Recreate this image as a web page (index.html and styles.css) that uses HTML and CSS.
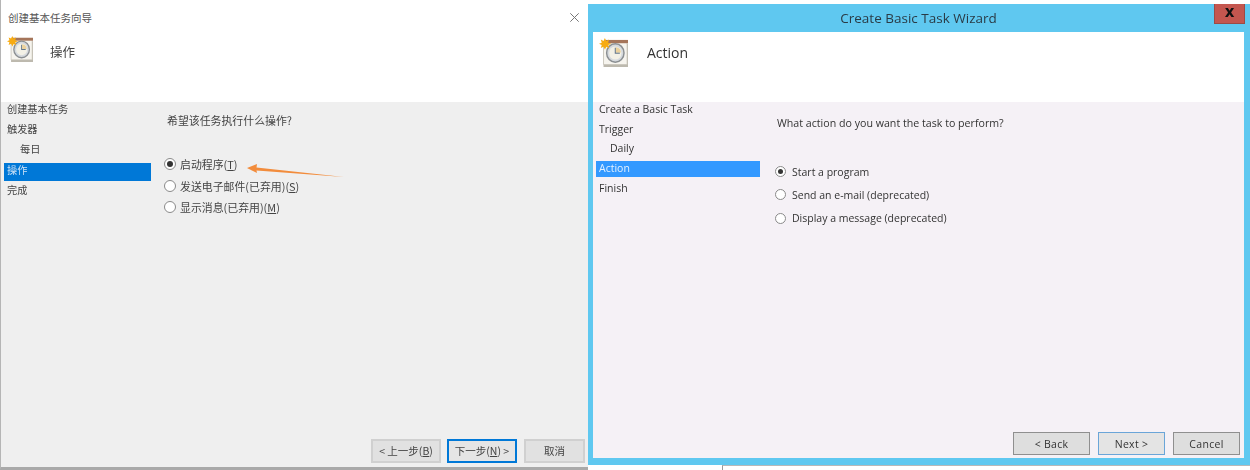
FILE: index.html
```html
<!DOCTYPE html>
<html lang="zh">
<head>
<meta charset="utf-8">
<title>Create Basic Task Wizard</title>
<link rel="stylesheet" href="styles.css">
</head>
<body>
<svg class="defs" width="0" height="0" aria-hidden="true">
  <symbol id="task" viewBox="0 0 32 30" preserveAspectRatio="none">
    <path d="M5 6h27v24H5z" fill="#bdb9ae"/>
    <path d="M5 4h26v23.5H5z" fill="#f6f4ee" stroke="#c4c0b5" stroke-width=".8"/>
    <path d="M6 2h26v3.4H6z" fill="#a5755a"/>
    <circle cx="18" cy="15.5" r="9.6" fill="#d6dade" stroke="#8b8f92" stroke-width="1.6"/>
    <circle cx="18" cy="15.5" r="6.8" fill="#f3f1e6"/>
    <path d="M18 10v5.6h5" fill="none" stroke="#64788c" stroke-width="1.2"/>
    <path d="M18.6 9.5a6 6 0 0 1 5.6 5.5h-5.6z" fill="#e9c98a" opacity=".8"/>
    <path d="M6.5 0l1.5 3 3-1.4-.9 3.2 3.4 1.2-3.3 1.3 1 3.2-3.1-1.4L6.5 12 5 9l-3 1.4 1-3.2L-.2 6l3.2-1.2-1-3.2 3 1.4z" fill="#f7ab12"/>
  </symbol>
</svg>
<div class="page">
  <section class="win win-zh">
    <header class="head-zh">
      <div class="title-zh"><span>创建基本任务向导</span><svg class="close-thin" viewBox="0 0 9 9"><path d="M.3.3l8.4 8.4M8.7.3L.3 8.7" stroke="#777" fill="none"/></svg></div>
      <div class="action-zh"><svg class="icon"><use href="#task"/></svg><h1>操作</h1></div>
    </header>
    <div class="body-zh">
      <ul class="steps steps-zh">
        <li>创建基本任务</li>
        <li>触发器</li>
        <li class="sub">每日</li>
        <li class="sel">操作</li>
        <li>完成</li>
      </ul>
      <div class="main main-zh">
        <p class="q">希望该任务执行什么操作?</p>
        <div class="opts">
          <label class="opt"><i class="radio on"></i><span>启动程序(<u>T</u>)</span></label>
          <label class="opt"><i class="radio"></i><span>发送电子邮件(已弃用)(<u>S</u>)</span></label>
          <label class="opt"><i class="radio"></i><span>显示消息(已弃用)(<u>M</u>)</span></label>
        </div>
        <svg class="arrow" viewBox="0 0 100 15"><path d="M1 5L11 1l-.5 3.5L98 14 10.5 7.5 11 10z" fill="#f28c3c"/></svg>
        <div class="btns">
          <button class="b-back">&lt; 上一步(<u>B</u>)</button>
          <button class="b-next default">下一步(<u>N</u>) &gt;</button>
          <button class="b-cancel">取消</button>
        </div>
      </div>
    </div>
  </section>
  <div class="right">
    <section class="win win-en" lang="en">
      <div class="titlebar"><span>Create Basic Task Wizard</span><div class="close-red">x</div></div>
      <div class="inner">
        <header class="head-en"><svg class="icon"><use href="#task"/></svg><h1>Action</h1></header>
        <div class="body-en">
          <ul class="steps steps-en">
            <li>Create a Basic Task</li>
            <li>Trigger</li>
            <li class="sub">Daily</li>
            <li class="sel">Action</li>
            <li>Finish</li>
          </ul>
          <div class="main main-en">
            <p class="q">What action do you want the task to perform?</p>
            <div class="opts">
              <label class="opt"><i class="radio on"></i><span>Start a program</span></label>
              <label class="opt"><i class="radio"></i><span>Send an e-mail (deprecated)</span></label>
              <label class="opt"><i class="radio"></i><span>Display a message (deprecated)</span></label>
            </div>
            <div class="btns">
              <button>&lt; Back</button>
              <button class="default">Next &gt;</button>
              <button>Cancel</button>
            </div>
          </div>
        </div>
      </div>
    </section>
    <div class="sliver"></div>
  </div>
</div>
</body>
</html>
```

FILE: styles.css
```css
* { box-sizing: border-box; }
html, body { margin: 0; padding: 0; background: #fff; }
body { width: 1250px; height: 470px; overflow: hidden; color: #333; }
.defs { position: absolute; }
.page { display: flex; align-items: flex-start; width: 1250px; height: 470px; filter: blur(.4px); }
ul { list-style: none; margin: 0; padding: 0; }
h1, p { margin: 0; font-weight: 400; }
u { text-underline-offset: 1px; }
.icon { flex: none; display: block; }

/* Chinese window */
.win-zh { width: 588px; height: 470px; display: flex; flex-direction: column; border-left: 1px solid #b5b5b5; border-bottom: 3px solid #a9a9a9; font: 10.5px/14px "Noto Sans CJK SC", sans-serif; }
.head-zh { height: 102px; flex: none; background: #fff; }
.title-zh { display: flex; justify-content: space-between; align-items: center; padding: 10px 9px 0 7px; height: 25px; color: #555; }
.close-thin { width: 9px; height: 9px; }
.action-zh { display: flex; align-items: center; gap: 17px; padding: 11px 0 0 6px; }
.action-zh .icon { width: 26px; height: 26px; }
.action-zh h1 { font-size: 12.5px; line-height: 20px; margin-top: 6px; color: #444; }
.body-zh { flex: 1; display: flex; background: #efefef; }
.steps-zh { width: 150px; flex: none; padding: 0 0 0 3px; font-size: 10.2px; }
.steps-zh li { height: 20px; line-height: 14px; padding: 0 3px; color: #444; }
.steps-zh .sub { padding-left: 16px; }
.steps-zh .sel { height: 18px; background: #0078d7; color: #cfe3f7; margin-top: 1px; margin-bottom: 2px; }
.main-zh { flex: 1; display: flex; flex-direction: column; position: relative; padding: 10px 3px 0 13px; font-size: 10.9px; }
.main-zh .q { line-height: 16px; padding-left: 3px; color: #444; }
.main-zh .opts { display: flex; flex-direction: column; gap: 7px; margin-top: 29px; }
.main-zh .opt { display: flex; align-items: center; height: 14.5px; gap: 4px; color: #444; }
.main-zh .radio { width: 12px; height: 12px; }
.arrow { position: absolute; left: 95px; top: 61px; width: 100px; height: 15px; }
.main-zh .btns { margin-top: auto; margin-bottom: 4px; display: flex; gap: 6px; justify-content: flex-end; font-size: 10.5px; }
.main-zh button { height: 24px; font: inherit; color: #444; }
.b-back { width: 70px; }
.b-next { width: 70px; }
.b-cancel { width: 61px; margin-left: 1px; }

/* Shared */
.radio { display: block; flex: none; border-radius: 50%; background: #fff; border: 1.5px solid #8a8a8a; position: relative; }
.radio.on::after { content: ""; position: absolute; inset: 2px; border-radius: 50%; background: #333; }
button { padding: 0; background: #e1e1e1; border: 2px solid #d0d0d0; border-radius: 0; }
.main-zh button.default { border-color: #0078d7; background: #e5e5e5; }

/* English window */
.right { width: 662px; display: flex; flex-direction: column; }
.sliver { height: 5px; margin-left: 134px; border-left: 1px solid #9a9a9a; border-top: 1px solid #b8b8b8; }
.win-en { width: 662px; height: 461px; margin-top: 4px; background: #5fc8f0; display: flex; flex-direction: column; padding: 0 6px 7px 5px; font: 10.5px/14px "Open Sans", sans-serif; }
.titlebar { height: 28px; flex: none; display: flex; align-items: center; justify-content: center; position: relative; font-size: 13.5px; color: #2a3b46; }
.close-red { position: absolute; top: 0; right: -1px; width: 31px; height: 20px; background: #c4564f; border: 1px solid #9c4a45; border-top: 0; color: #111; font: 700 15px/16px "DejaVu Sans", sans-serif; text-align: center; }
.inner { flex: 1; display: flex; flex-direction: column; background: #fff; }
.head-en { height: 70px; flex: none; display: flex; align-items: flex-start; gap: 19px; padding: 6px 0 0 6px; background: #fff; }
.head-en .icon { width: 29px; height: 29px; }
.head-en h1 { font-size: 14px; line-height: 20px; margin-top: 5px; color: #333; }
.body-en { flex: 1; display: flex; background: #f5f1f6; }
.steps-en { width: 167px; flex: none; padding: 0 0 0 3px; }
.steps-en li { height: 19.6px; line-height: 13px; padding: 1px 3px 0; }
.steps-en .sub { padding-left: 14px; }
.steps-en .sel { height: 16px; line-height: 14px; padding-top: 0; background: #3399ff; color: #e2f0ff; margin-bottom: 4px; }
.main-en { flex: 1; display: flex; flex-direction: column; padding: 13px 4px 0 15px; }
.main-en .q { line-height: 16px; padding-left: 2px; font-size: 10.65px; }
.main-en .opts { display: flex; flex-direction: column; gap: 8.4px; margin-top: 33px; }
.main-en .opt { display: flex; align-items: center; gap: 6px; height: 15px; }
.main-en .radio { width: 11px; height: 11px; border-width: 1px; }
.main-en .radio.on::after { inset: 2px; }
.main-en .btns { margin-top: auto; margin-bottom: 3px; display: grid; grid-template-columns: 77px 67px 67px; column-gap: 8px; justify-content: end; }
.main-en button { height: 23px; font: inherit; letter-spacing: .3px; color: #333; background: #dedede; border: 1px solid #8f8f8f; }
.main-en button.default { border-color: #6aa5d8; background: #e4e4e4; }
```
